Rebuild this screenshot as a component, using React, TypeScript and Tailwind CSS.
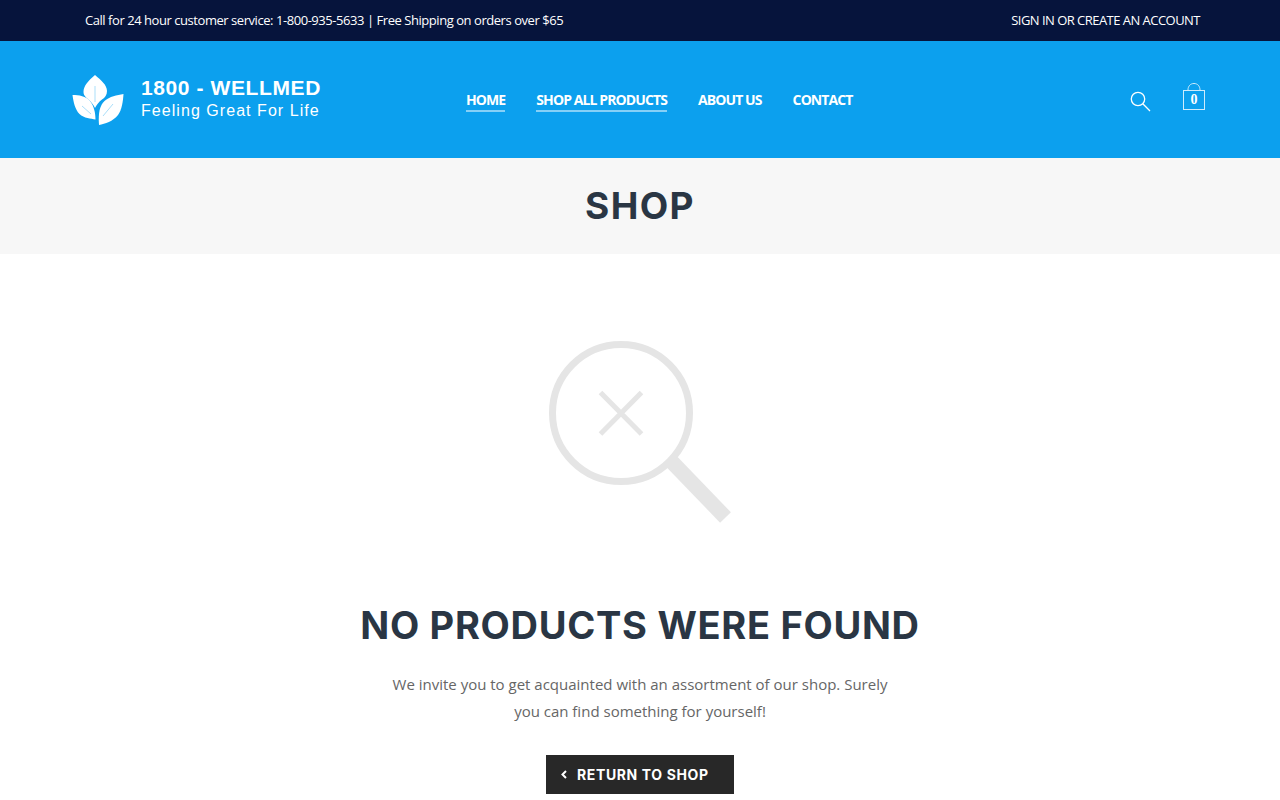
import React from 'react';

const sans = "font-['Open_Sans',sans-serif]";
const heading = "font-['Inter',sans-serif]";

const LeafLogo: React.FC = () => (
  <svg width="52" height="52" viewBox="0 0 52 52" fill="white">
    <path d="M23 1C16 7 11.500 12 11.500 18C11.500 22 15 24 17 26C19.500 28 21.500 31 23 34C24.500 31 27 27.500 30 25.500C33 23.500 35 21 35 17C35 11 29 6 23 1Z" />
    <path d="M0.500 21C7 21 14 22 18 27C22 32 23.500 39 23.500 45.500C19 44.500 12 44.500 7.500 40C3 35.500 1.500 28 0.500 21Z" />
    <path d="M51.500 20C45 21 37.500 22.500 32.500 27C28 31.500 26 38 27 51C33 49.500 41 47.500 46 41C50 35.500 51 27 51.500 20Z" />
    <path d="M23 12V28M10 32L19 40M41 30L31 42" stroke="#0ca0ee" strokeWidth="0.500" strokeOpacity="0.7" fill="none" />
  </svg>
);

const SearchIcon: React.FC = () => (
  <svg width="21" height="21" viewBox="0 0 21 21" fill="none" stroke="white" strokeWidth="1.300">
    <circle cx="8" cy="8" r="6.700" />
    <path d="M12.800 12.800L20 20" />
  </svg>
);

const CartIcon: React.FC = () => (
  <div className="flex flex-col items-center">
    <svg width="14" height="7" viewBox="0 0 14 7" fill="none" stroke="white" strokeWidth="1" className="opacity-80">
      <path d="M1 7C1 3 3.500 0.500 7 0.500C10.500 0.500 13 3 13 7" />
    </svg>
    <div className="flex h-[20px] w-[22px] items-center justify-center border border-white/80 pb-px font-['Liberation_Serif',serif] text-[14px] font-bold text-white">
      0
    </div>
  </div>
);

const NoResults: React.FC = () => (
  <svg width="182" height="183" viewBox="0 0 182 183" fill="none" stroke="#e5e5e5">
    <circle cx="72" cy="73" r="68.500" strokeWidth="7" />
    <path d="M51.500 52.500L92.500 94M92.500 52.500L51.500 94" strokeWidth="5" />
    <path d="M123 122L176.500 177.500" strokeWidth="15" />
  </svg>
);

const navItems = [
  { label: 'HOME', underline: true },
  { label: 'SHOP ALL PRODUCTS', underline: true },
  { label: 'ABOUT US', underline: false },
  { label: 'CONTACT', underline: false },
];

export default function App() {
  return (
    <div className={`${sans} min-h-[800px] overflow-hidden bg-white`}>
      <div className="flex h-[41px] items-center justify-between bg-[#06143c] pl-[85px] pr-[80px] text-[13px] tracking-[-0.45px] text-white">
        <span>Call for 24 hour customer service: 1-800-935-5633 | Free Shipping on orders over $65</span>
        <span className="tracking-[-0.53px]">SIGN IN OR CREATE AN ACCOUNT</span>
      </div>

      <header className="flex h-[117px] items-center justify-between bg-[#0ca0ee] pl-[72px] pr-[75px]">
        <div className="flex w-[394px] items-center gap-[17px]">
          <LeafLogo />
          <div className="pb-[4px] font-['Liberation_Sans',sans-serif] text-white">
            <div className="text-[21px] leading-[26px] font-bold tracking-[0.6px]">1800 - WELLMED</div>
            <div className="text-[16px] leading-[20px] tracking-[1.05px]">Feeling Great For Life</div>
          </div>
        </div>
        <nav className="flex gap-[31px] pt-[4px]">
          {navItems.map(item => (
            <a
              key={item.label}
              className={`border-b-2 pb-px text-[14px] leading-[18px] font-bold tracking-[-0.9px] text-white ${
                item.underline ? 'border-white/50' : 'border-transparent'
              }`}
            >
              {item.label}
            </a>
          ))}
        </nav>
        <div className="ml-auto flex items-center gap-[32px]">
          <div className="pt-[4px]">
            <SearchIcon />
          </div>
          <div className="pb-[6px]">
            <CartIcon />
          </div>
        </div>
      </header>

      <div className="flex h-[96px] items-center justify-center bg-[#f7f7f7]">
        <h1 className={`${heading} text-[37px] font-bold tracking-[1.4px] text-[#2a3644]`}>SHOP</h1>
      </div>

      <main className="flex flex-col items-center pt-[86px]">
        <NoResults />
        <h2 className={`${heading} mt-[78px] text-[38px] leading-[48px] font-bold tracking-[0.7px] text-[#2a3644]`}>
          NO PRODUCTS WERE FOUND
        </h2>
        <p className="mt-[22px] w-[510px] text-center text-[15px] leading-[27px] text-[#666666]">
          We invite you to get acquainted with an assortment of our shop. Surely you can find something for yourself!
        </p>
        <button className={`${heading} mt-[30px] flex h-[39px] w-[188px] items-center gap-[10px] bg-[#282828] pl-[15px] text-[14px] font-bold tracking-[0.62px] text-white`}>
          <svg width="6" height="9" viewBox="0 0 6 9" fill="none" stroke="white" strokeWidth="2">
            <path d="M5 1L1.500 4.500L5 8" />
          </svg>
          RETURN TO SHOP
        </button>
      </main>
    </div>
  );
}
